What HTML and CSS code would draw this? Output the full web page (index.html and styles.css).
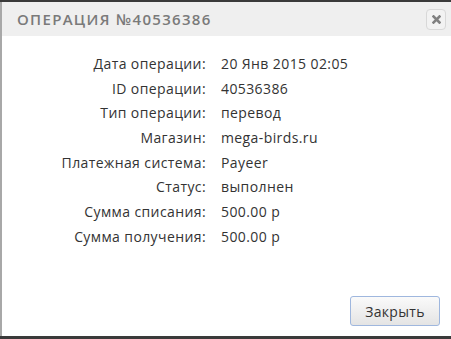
FILE: index.html
```html
<!DOCTYPE html>
<html lang="ru">
<head>
    <meta charset="UTF-8">
    <title>Операция</title>
    <link rel="stylesheet" href="styles.css">
</head>
<body>
<div class="modal">
    <div class="modal-header">
        <h3>Операция №40536386</h3>
        <button class="close-btn" title="Закрыть">
            <svg width="9" height="9" viewBox="0 0 9 9"><path d="M1.5 1.5 L7.5 7.5 M7.5 1.5 L1.5 7.5" stroke="#808080" stroke-width="2.6" stroke-linecap="square"/></svg>
        </button>
    </div>
    <div class="modal-body">
        <table class="info">
            <tr><td class="label">Дата операции:</td><td>20 Янв 2015 02:05</td></tr>
            <tr><td class="label">ID операции:</td><td>40536386</td></tr>
            <tr><td class="label">Тип операции:</td><td>перевод</td></tr>
            <tr><td class="label">Магазин:</td><td>mega-birds.ru</td></tr>
            <tr><td class="label">Платежная система:</td><td>Payeer</td></tr>
            <tr><td class="label">Статус:</td><td>выполнен</td></tr>
            <tr><td class="label">Сумма списания:</td><td>500.00 р</td></tr>
            <tr><td class="label">Сумма получения:</td><td>500.00 р</td></tr>
        </table>
    </div>
    <div class="modal-footer">
        <button class="button">Закрыть</button>
    </div>
</div>
</body>
</html>
```

FILE: styles.css
```css
/* General styles */
html, body {
    margin: 0;
    padding: 0;
    height: 100%;
}

body {
    font-family: "Open Sans", Arial, sans-serif;
    background-color: #3a3a3a;
    color: #333;
}

/* Modal box */
.modal {
    box-sizing: border-box;
    height: 334px;
    margin-top: 2px;
    background-color: #fff;
    border-left: 2px solid #a8a8a8;
    display: flex;
    flex-direction: column;
}

.modal-header {
    height: 34px;
    background-color: #efefef;
    display: flex;
    align-items: center;
    justify-content: space-between;
    padding: 0 5px 0 15px;
}

.modal-header h3 {
    margin: 0;
    font-size: 15px;
    font-weight: 600;
    letter-spacing: 1.3px;
    text-transform: uppercase;
    color: #7a7a7a;
}

.close-btn {
    width: 20px;
    height: 21px;
    padding: 0;
    border: 1px solid #d8d8d8;
    border-radius: 4px;
    background-color: #f2f2f2;
    display: flex;
    align-items: center;
    justify-content: center;
    cursor: pointer;
}

/* Info table */
.modal-body {
    flex: 1;
    padding-top: 15px;
}

.info {
    border-collapse: collapse;
    font-size: 14px;
    letter-spacing: 0.4px;
}

.info td {
    padding: 0;
    height: 24.7px;
    vertical-align: middle;
    white-space: nowrap;
}

.info .label {
    width: 204px;
    text-align: right;
    padding-right: 15px;
}

/* Footer */
.modal-footer {
    display: flex;
    justify-content: flex-end;
    padding: 0 11px 10px 0;
}

.button {
    width: 90px;
    height: 30px;
    font-family: "Open Sans", Arial, sans-serif;
    font-size: 14px;
    letter-spacing: 0.3px;
    color: #333;
    background: linear-gradient(#fafafa, #e4e4e4);
    border: 1px solid #9fb7de;
    border-radius: 3px;
    cursor: pointer;
}
```
